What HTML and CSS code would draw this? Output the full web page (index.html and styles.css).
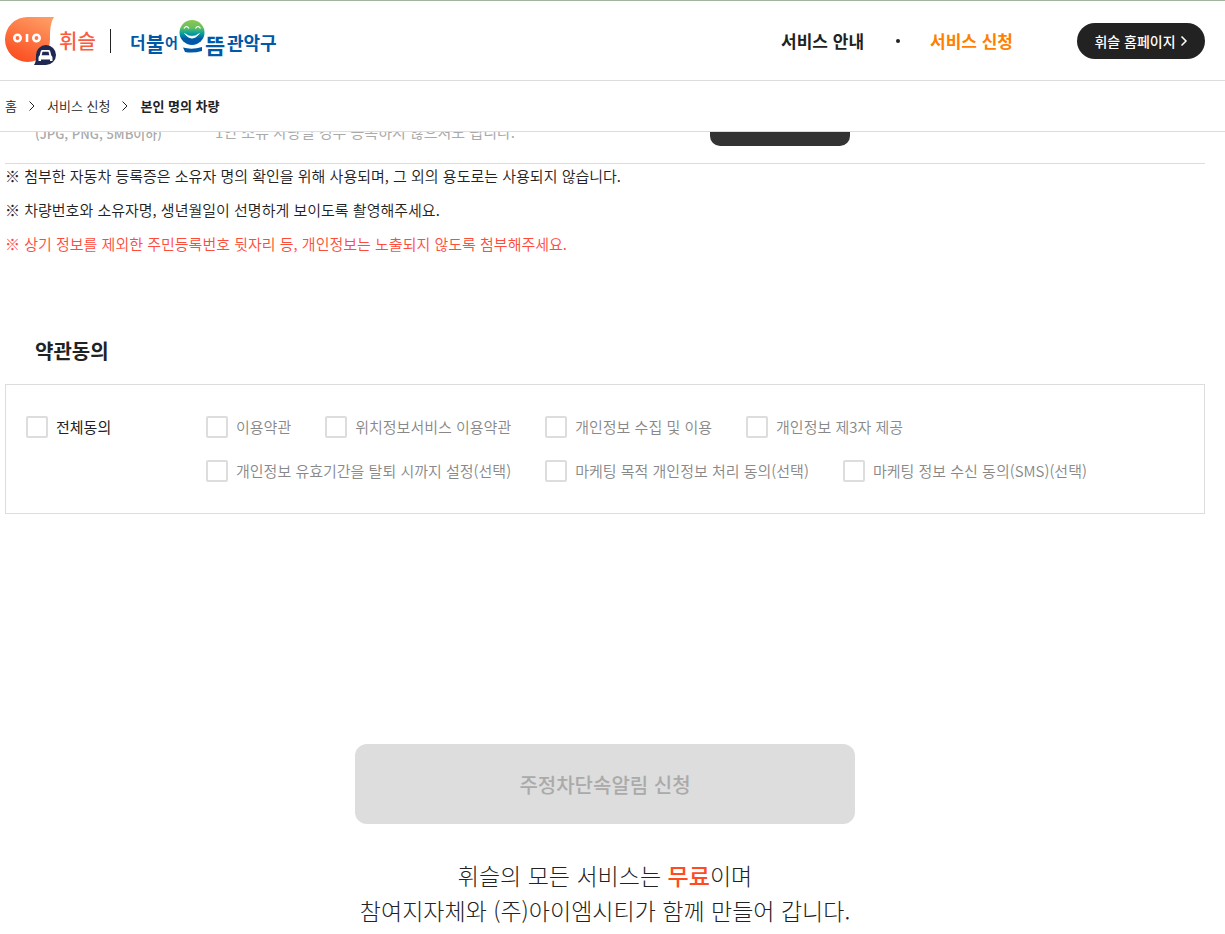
FILE: index.html
```html
<!DOCTYPE html>
<html lang="ko">

<head>
  <meta charset="UTF-8">
  <meta name="viewport" content="width=device-width, initial-scale=1.0">
  <title>휘슬 - 주정차단속알림 서비스</title>
  <link rel="stylesheet" href="styles.css">
</head>

<body>
  <header class="header">
    <div class="header-top">
      <div class="inner">
        <div class="logos">
          <a href="#" class="logo-whistle" aria-label="휘슬">
            <svg width="52" height="50" viewBox="0 0 52 50" aria-hidden="true">
              <defs>
                <linearGradient id="orange" x1="0.8" y1="0" x2="0.3" y2="1">
                  <stop offset="0" stop-color="#ff9c63"/>
                  <stop offset="1" stop-color="#fb4d20"/>
                </linearGradient>
              </defs>
              <path d="M23 1H49C46 6 45 11 45 23A22.5 22.5 0 1 1 23 1Z" fill="url(#orange)"/>
              <g fill="none" stroke="#fff" stroke-width="2.6">
                <circle cx="12.5" cy="22" r="3.2"/>
                <path d="M22 18v8"/>
                <circle cx="31.5" cy="22" r="3.2"/>
              </g>
              <path d="M29 49C31 46 31 43 31 39A10 10 0 1 1 41 49Z" fill="#1f2850"/>
              <path d="M37.5 34h6c1 0 1.500.5 1.800 1.500l1 4c.8.5 1.200 1.300 1.200 2.500v3h-2.500v-1.500h-9V45h-2.500v-3c0-1.200.4-2 1.200-2.500l1-4c.3-1 .8-1.500 1.800-1.500z" fill="#fff"/>
              <path d="M37.500 35.800h6l.8 3.400h-7.600z" fill="#1f2850"/>
            </svg>
            <span>휘슬</span>
          </a>
          <a href="#" class="logo-city" aria-label="더불어 으뜸 관악구">
            <svg width="150" height="46" viewBox="0 0 150 46">
              <defs>
                <linearGradient id="face" x1="0" y1="0" x2="0" y2="1">
                  <stop offset="0" stop-color="#8cc751"/>
                  <stop offset=".3" stop-color="#6abf5e"/>
                  <stop offset=".55" stop-color="#009f9f"/>
                  <stop offset=".75" stop-color="#0058a8"/>
                  <stop offset="1" stop-color="#0058a8"/>
                </linearGradient>
              </defs>
              <g class="city-text">
                <text x="0" y="31" font-size="17">더</text>
                <text x="16" y="34" font-size="20">불</text>
                <text x="35" y="30" font-size="14">어</text>
                <text x="75" y="36" font-size="22">뜸</text>
                <text x="97" y="32" font-size="18">관악구</text>
              </g>
              <circle cx="62" cy="14.5" r="12.5" fill="url(#face)"/>
              <path d="M54 10.500q2.500-4 5 0M65.500 10.500q2.500-4 5 0" fill="none" stroke="#fff" stroke-width="1.200"/>
              <path d="M54.500 15.500q7.500 9.500 15 0-7.500 5.500-15 0z" fill="#fff" stroke="#fff" stroke-width=".6"/>
              <path d="M53 29.500q9 2.500 19-.5v4q-9 2.500-17 1z" fill="#0058a8"/>
            </svg>
          </a>
        </div>
        <nav class="gnb">
          <a href="#">서비스 안내</a>
          <span class="dot"></span>
          <a href="#" class="on">서비스 신청</a>
          <a href="#" class="btn-home">휘슬 홈페이지
            <svg width="8" height="12" viewBox="0 0 8 12" aria-hidden="true"><path d="M1.500 1.500 6 6l-4.500 4.500" fill="none" stroke="#fff" stroke-width="1.500"/></svg>
          </a>
        </nav>
      </div>
    </div>
    <nav class="breadcrumb">
      <div class="inner">
        <a href="#">홈</a>
        <svg width="6" height="10" viewBox="0 0 6 10" aria-hidden="true"><path d="M.5.5 5 5 .5 9.500" fill="none" stroke="#222"/></svg>
        <a href="#">서비스 신청</a>
        <svg width="6" height="10" viewBox="0 0 6 10" aria-hidden="true"><path d="M.5.5 5 5 .5 9.500" fill="none" stroke="#222"/></svg>
        <strong>본인 명의 차량</strong>
      </div>
    </nav>
  </header>

  <main class="content">
    <div class="file-row">
      <span class="file-label">(JPG, PNG, 5MB이하)</span>
      <span class="file-guide">1인 소유 차량일 경우 등록하지 않으셔도 됩니다.</span>
      <button type="button" class="btn-file" aria-label="파일첨부"></button>
    </div>
    <ul class="notes">
      <li>※ 첨부한 자동차 등록증은 소유자 명의 확인을 위해 사용되며, 그 외의 용도로는 사용되지 않습니다.</li>
      <li>※ 차량번호와 소유자명, 생년월일이 선명하게 보이도록 촬영해주세요.</li>
      <li class="red">※ 상기 정보를 제외한 주민등록번호 뒷자리 등, 개인정보는 노출되지 않도록 첨부해주세요.</li>
    </ul>

    <h2>약관동의</h2>
    <div class="terms">
      <label class="check all"><input type="checkbox">전체동의</label>
      <div class="terms-list">
        <div class="terms-line">
          <label class="check"><input type="checkbox">이용약관</label>
          <label class="check"><input type="checkbox">위치정보서비스 이용약관</label>
          <label class="check"><input type="checkbox">개인정보 수집 및 이용</label>
          <label class="check"><input type="checkbox">개인정보 제3자 제공</label>
        </div>
        <div class="terms-line">
          <label class="check"><input type="checkbox">개인정보 유효기간을 탈퇴 시까지 설정(선택)</label>
          <label class="check"><input type="checkbox">마케팅 목적 개인정보 처리 동의(선택)</label>
          <label class="check"><input type="checkbox">마케팅 정보 수신 동의(SMS)(선택)</label>
        </div>
      </div>
    </div>

    <button type="submit" class="btn-submit" disabled>주정차단속알림 신청</button>
    <p class="free">휘슬의 모든 서비스는 <strong>무료</strong>이며<br>참여지자체와 (주)아이엠시티가 함께 만들어 갑니다.</p>
  </main>
</body>

</html>
```
FILE: styles.css
```css
* {
  box-sizing: border-box;
}

body {
  margin: 0;
  background: #fff;
  color: #222;
  font-family: "Noto Sans CJK KR", sans-serif;
  font-size: 15px;
  font-weight: 350;
  line-height: 24px;
}

a {
  color: inherit;
  text-decoration: none;
}

button,
input {
  font-family: inherit;
}

.header {
  position: sticky;
  top: 0;
  z-index: 10;
  background: #fff;
  border-top: 1px solid #a0b49e;
}

.header-top {
  border-bottom: 1px solid #ddd;
}

.inner,
.content {
  max-width: 1225px;
  margin: 0 auto;
  padding: 0 20px 0 5px;
}

.header-top .inner {
  display: flex;
  align-items: center;
  justify-content: space-between;
  height: 79px;
}

.logos,
.logo-whistle,
.gnb {
  display: flex;
  align-items: center;
}

.logo-whistle {
  gap: 2px;
  color: #fb5c41;
  font-size: 20px;
  font-weight: 500;
}

.logo-whistle svg,
.logo-city svg {
  display: block;
}

.logo-city {
  margin-left: 14px;
  padding-left: 20px;
  background: linear-gradient(#222, #222) left center / 1px 24px no-repeat;
}

.city-text {
  fill: #0058a8;
  font-weight: 700;
}

.gnb {
  font-size: 17px;
  font-weight: 700;
}

.dot {
  width: 4px;
  height: 4px;
  margin: 0 30px 0 32px;
  border-radius: 50%;
  background: #222;
}

.gnb .on {
  color: #ff7f00;
}

.gnb .btn-home {
  display: flex;
  align-items: center;
  justify-content: center;
  gap: 4px;
  width: 128px;
  height: 36px;
  margin-left: 64px;
  border-radius: 18px;
  background: #222;
  color: #fff;
  font-size: 14px;
  font-weight: 500;
}

.breadcrumb {
  border-bottom: 1px solid #ddd;
  font-size: 13px;
}

.breadcrumb .inner {
  display: flex;
  align-items: center;
  gap: 12px;
  height: 50px;
}

.breadcrumb strong {
  font-weight: 700;
}

/* row scrolled under the fixed header */
.file-row {
  display: flex;
  align-items: flex-end;
  height: 80px;
  margin-top: -48px;
  padding: 0 0 17px 30px;
  border-bottom: 1px solid #ddd;
  color: #aaa;
  font-weight: 400;
  line-height: 28px;
}

.file-label {
  width: 180px;
  font-size: 13px;
  font-weight: 500;
  line-height: 24px;
}

.file-guide {
  width: 495px;
}

.btn-file {
  width: 140px;
  height: 40px;
  border: 0;
  border-radius: 10px;
  background: #333;
}

.notes {
  margin: 0;
  padding: 0;
  list-style: none;
}

.notes li {
  margin-bottom: 10px;
}

.notes .red {
  color: #ff4b3a;
}

h2 {
  margin: 80px 0 18px;
  padding-left: 30px;
  font-size: 20px;
  font-weight: 700;
  line-height: 30px;
}

.terms {
  display: flex;
  align-items: flex-start;
  padding: 30px 20px;
  border: 1px solid #ddd;
}

.terms-list {
  display: grid;
  gap: 20px;
}

.terms-line {
  display: flex;
  flex-wrap: wrap;
  gap: 34px;
}

.check {
  display: flex;
  align-items: center;
  gap: 8px;
  color: #888;
}

.check.all {
  width: 180px;
  color: #222;
  font-weight: 400;
}

.check input {
  appearance: none;
  width: 22px;
  height: 22px;
  margin: 0;
  border: 2px solid #ddd;
  border-radius: 2px;
  background: #fff;
}

.check input:checked {
  background: #ff7f00;
}

.btn-submit {
  display: block;
  width: 500px;
  height: 80px;
  margin: 230px auto 34px;
  border: 0;
  border-radius: 12px;
  background: #ddd;
  color: #aaa;
  font-size: 20px;
  font-weight: 500;
}

.free {
  margin: 0;
  font-size: 23px;
  font-weight: 300;
  line-height: 35px;
  text-align: center;
}

.free strong {
  color: #ff4b21;
  font-weight: 500;
}
```
